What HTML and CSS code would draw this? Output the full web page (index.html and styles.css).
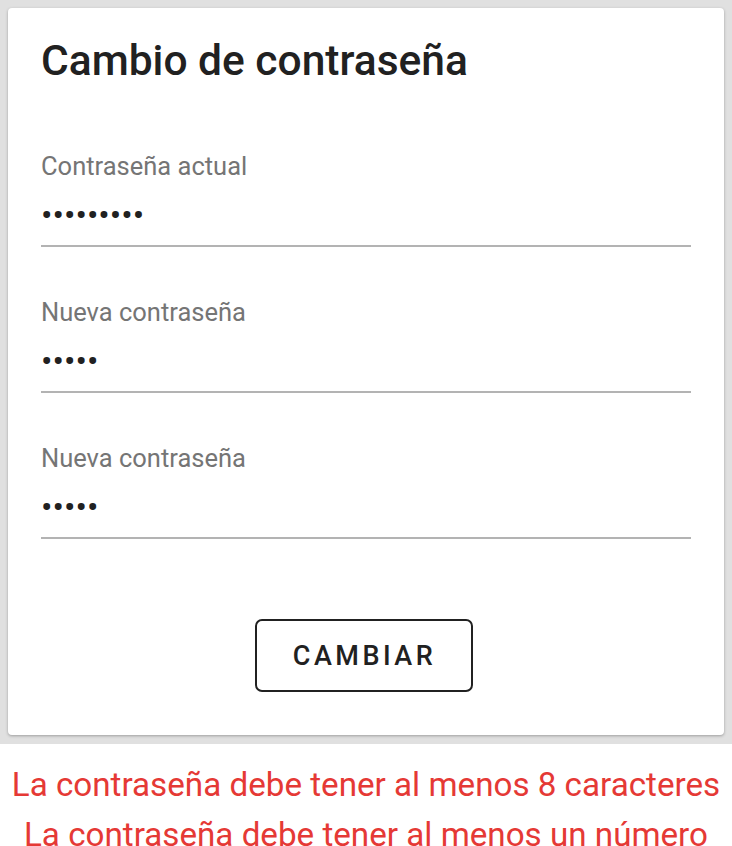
FILE: index.html
```html
<!DOCTYPE html>
<html lang="es">
<head>
<meta charset="utf-8">
<title>Cambio de contraseña</title>
<link rel="stylesheet" href="styles.css">
</head>
<body>
<div class="page">
  <div class="card">
    <h1 class="title">Cambio de contraseña</h1>
    <div class="field">
      <label class="label">Contraseña actual</label>
      <input class="input" type="password" value="123456789">
    </div>
    <div class="field">
      <label class="label">Nueva contraseña</label>
      <input class="input" type="password" value="12345">
    </div>
    <div class="field field-last">
      <label class="label">Nueva contraseña</label>
      <input class="input" type="password" value="12345">
    </div>
    <div class="actions">
      <button class="button" type="button">CAMBIAR</button>
    </div>
  </div>
</div>
<div class="errors">
  <p class="error">La contraseña debe tener al menos 8 caracteres</p>
  <p class="error">La contraseña debe tener al menos un número</p>
</div>
</body>
</html>
```
FILE: styles.css
```css
html, body {
  margin: 0;
  padding: 0;
  background: #ffffff;
  font-family: Roboto, "Noto Sans", sans-serif;
}
.page {
  background: #e0e0e0;
  padding: 8px 8px 9px 8px;
}
.card {
  background: #ffffff;
  border-radius: 4px;
  box-shadow: 0 1px 3px rgba(0, 0, 0, 0.3);
  padding: 28px 33px 43px 33px;
}
.title {
  margin: 0 0 65px 0;
  font-size: 42.5px;
  line-height: 50px;
  font-weight: 500;
  color: #212121;
}
.field {
  display: flex;
  flex-direction: column;
  margin-bottom: 50px;
}
.field-last {
  margin-bottom: 80px;
}
.label {
  font-size: 25.5px;
  line-height: 30px;
  color: #757575;
  margin-bottom: 19px;
}
.input {
  font-family: Roboto, sans-serif;
  font-size: 34px;
  height: 30px;
  padding: 0 0 15px 0;
  border: none;
  border-bottom: 2px solid #b3b3b3;
  outline: none;
  color: #212121;
  background: transparent;
  box-sizing: content-box;
}
.actions {
  display: flex;
  justify-content: center;
  padding-right: 4px;
}
.button {
  width: 218px;
  height: 73px;
  border: 2px solid #212121;
  border-radius: 7px;
  background: #ffffff;
  font-family: Roboto, sans-serif;
  font-size: 27px;
  font-weight: 500;
  letter-spacing: 3.5px;
  color: #212121;
  padding: 0 0 0 1px;
}
.errors {
  margin-top: 16px;
}
.error {
  margin: 0;
  text-align: center;
  color: #e53935;
  font-size: 33.2px;
  line-height: 50px;
  white-space: nowrap;
}
```
